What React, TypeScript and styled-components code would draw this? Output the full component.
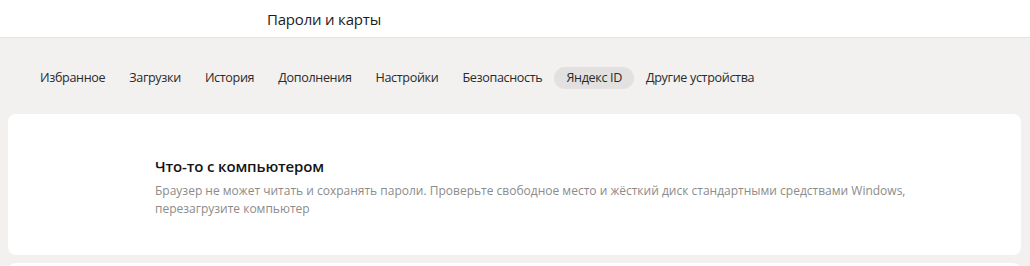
import React from "react";
import styled, { createGlobalStyle } from "styled-components";

const GlobalStyle = createGlobalStyle`
    html, body {
        margin: 0;
        padding: 0;
        background: #f2f1f0;
        font-family: "Open Sans", "Noto Sans", sans-serif;
        color: #1f1f1f;
    }
`;

const Page = styled.div`
    width: 1030px;
    height: 266px;
    overflow: hidden;
    background: #f2f1f0;
`;

const Header = styled.header`
    height: 38px;
    background: #ffffff;
    border-bottom: 1px solid #e4e3e1;
    display: flex;
    align-items: center;
    padding-left: 267px;
    box-sizing: border-box;
`;

const Title = styled.h1`
    margin: 0;
    font-size: 15px;
    font-weight: 400;
    color: #1c1c1c;
    letter-spacing: -0.2px;
`;

const Tabs = styled.nav`
    display: flex;
    align-items: center;
    padding: 29px 0 0 28px;
    height: 22px;
`;

const Tab = styled.div<{ active?: boolean }>`
    height: 22px;
    line-height: 22px;
    padding: 0 12px;
    border-radius: 11px;
    font-size: 12.6px;
    letter-spacing: -0.35px;
    color: #2a2a2a;
    background: ${props => (props.active ? "#e2e1df" : "transparent")};
    white-space: nowrap;
`;

const Card = styled.section`
    margin: 25px 9px 0 8px;
    height: 141px;
    background: #ffffff;
    border-radius: 8px;
    padding: 41px 0 0 147px;
    box-sizing: border-box;
`;

const NextCard = styled.div`
    margin: 8px 9px 0 8px;
    height: 40px;
    background: #ffffff;
    border-radius: 8px 8px 0 0;
`;

const CardTitle = styled.h2`
    margin: 0 0 5px;
    font-size: 15px;
    font-weight: 600;
    color: #141414;
    letter-spacing: -0.15px;
    line-height: 22px;
`;

const Description = styled.p`
    margin: 0;
    max-width: 800px;
    font-size: 12px;
    line-height: 18px;
    color: #8c8b8a;
`;

const tabs = [
    "Избранное",
    "Загрузки",
    "История",
    "Дополнения",
    "Настройки",
    "Безопасность",
    "Яндекс ID",
    "Другие устройства",
];

export default function App() {
    return (
        <Page>
            <GlobalStyle />
            <Header>
                <Title>Пароли и карты</Title>
            </Header>
            <Tabs>
                {tabs.map(name => (
                    <Tab key={name} active={name === "Яндекс ID"}>
                        {name}
                    </Tab>
                ))}
            </Tabs>
            <Card>
                <CardTitle>Что-то с компьютером</CardTitle>
                <Description>
                    Браузер не может читать и сохранять пароли. Проверьте свободное место и жёсткий диск
                    стандартными средствами Windows, перезагрузите компьютер
                </Description>
            </Card>
            <NextCard />
        </Page>
    );
}
